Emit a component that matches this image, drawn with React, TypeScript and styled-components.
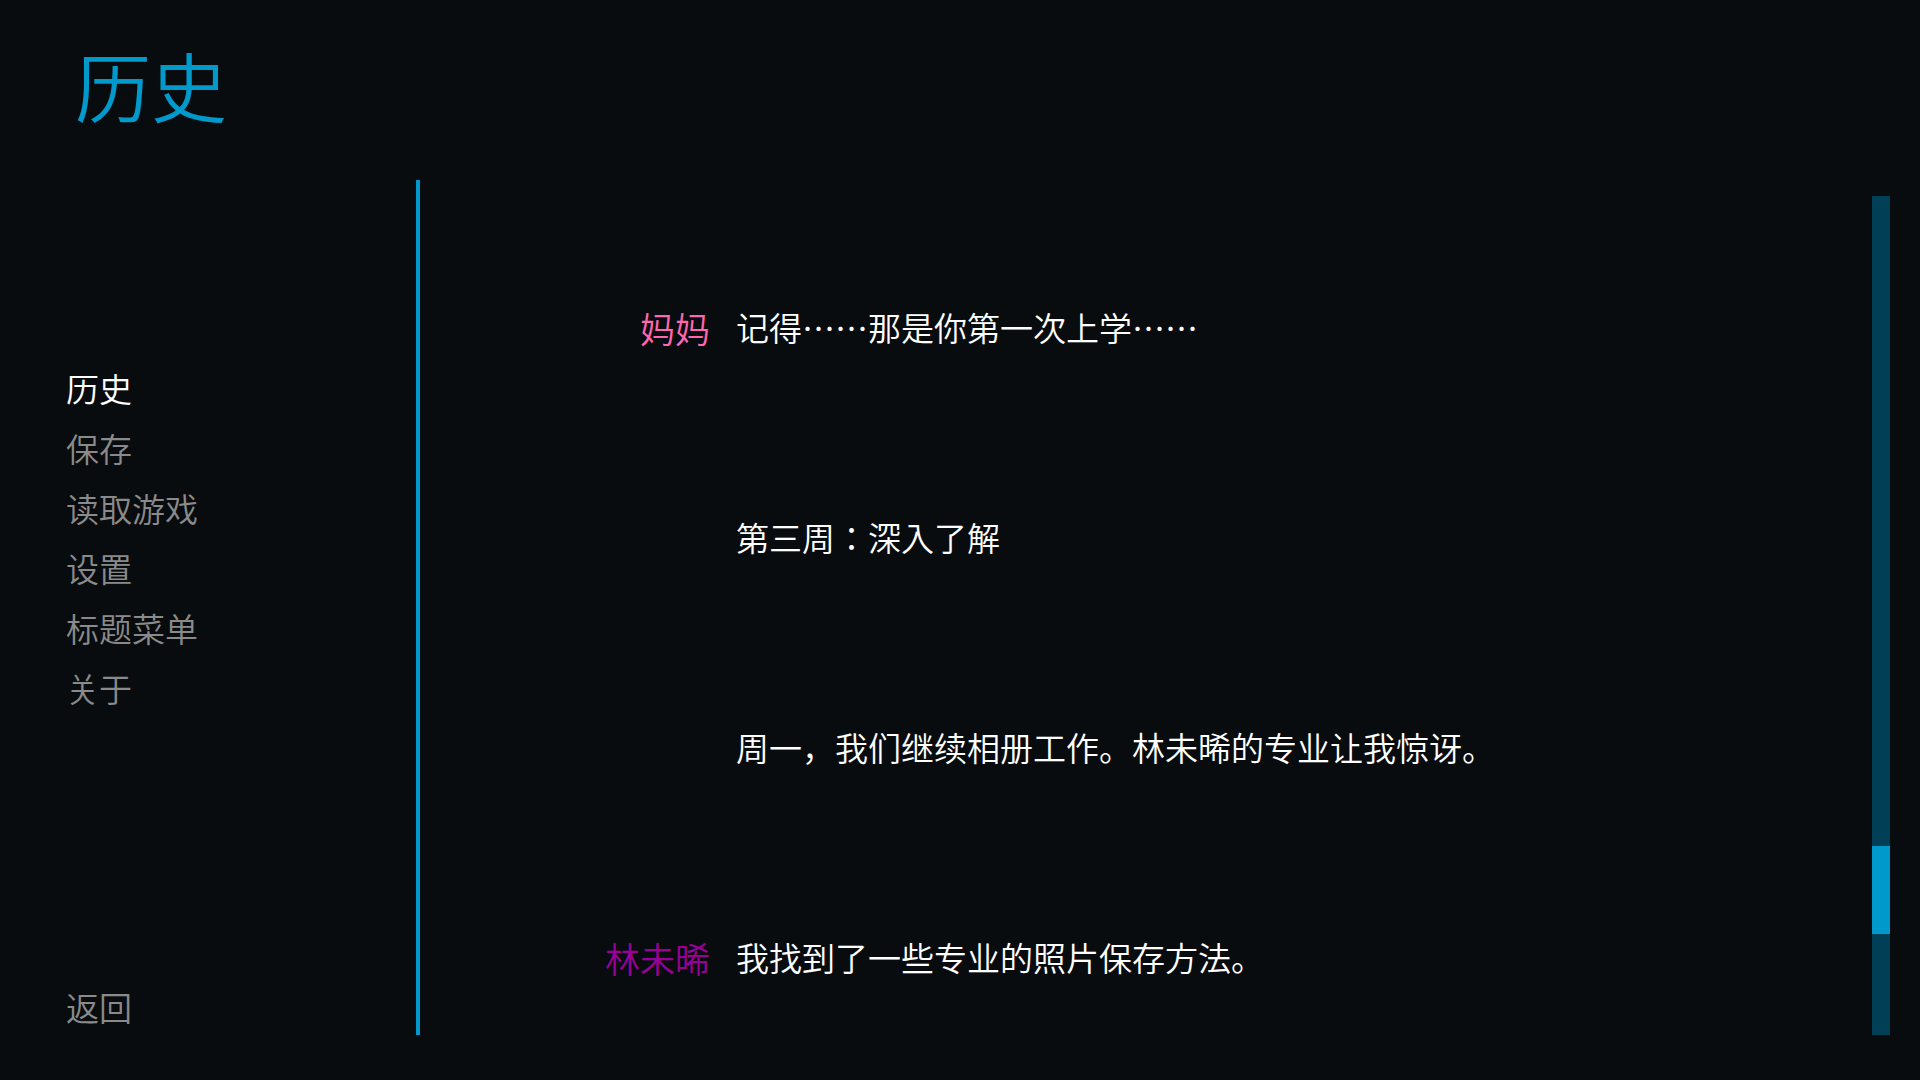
import React from 'react';
import styled, { createGlobalStyle } from 'styled-components';

const GlobalStyle = createGlobalStyle`
    html, body {
        margin: 0;
        padding: 0;
        background: #080c0e;
    }
    body {
        font-family: "Noto Sans CJK JP", "Noto Sans CJK SC", "Noto Sans", sans-serif;
    }
`;

const Screen = styled.div`
    width: 1920px;
    height: 1080px;
    background: #080c0e;
    display: flex;
    flex-direction: column;
    overflow: hidden;
`;

const Title = styled.h1`
    margin: 0;
    padding: 46px 0 0 75px;
    height: 180px;
    box-sizing: border-box;
    font-size: 76px;
    line-height: 1;
    font-weight: 350;
    color: #0099cc;
`;

const Body = styled.div`
    display: flex;
    height: 855px;
`;

const Nav = styled.nav`
    width: 416px;
    box-sizing: border-box;
    padding: 178px 0 0 66px;
    display: flex;
    flex-direction: column;
`;

const NavItem = styled.div<{ $active?: boolean }>`
    font-size: 33px;
    line-height: 60px;
    font-weight: 350;
    color: ${(props) => (props.$active ? '#ffffff' : '#8a8a8a')};
`;

const BackItem = styled(NavItem)`
    margin-top: auto;
    line-height: 54px;
    margin-bottom: 1px;
`;

const Main = styled.div`
    flex: 1;
    display: flex;
    border-left: 4px solid #0099cc;
    padding-right: 30px;
`;

const Viewport = styled.div`
    flex: 1;
    overflow: hidden;
    padding-top: 42px;
`;

const Entry = styled.div`
    display: grid;
    grid-template-columns: 290px 1fr;
    column-gap: 26px;
    align-items: center;
    height: 210px;
`;

const Who = styled.div<{ color: string }>`
    text-align: right;
    font-size: 35px;
    font-weight: 350;
    color: ${(props) => props.color};
`;

const What = styled.div`
    font-size: 33px;
    font-weight: 350;
    color: #ffffff;
`;

const Track = styled.div`
    width: 18px;
    margin-top: 16px;
    background: #003f55;
    position: relative;
`;

const Thumb = styled.div`
    position: absolute;
    left: 0;
    width: 18px;
    background: #0099cc;
`;

const history = [
    { who: '妈妈', color: '#ff66b0', what: '记得……那是你第一次上学……' },
    { who: '', color: '#ffffff', what: '第三周：深入了解' },
    { who: '', color: '#ffffff', what: '周一，我们继续相册工作。林未晞的专业让我惊讶。' },
    { who: '林未晞', color: '#990099', what: '我找到了一些专业的照片保存方法。' },
];

const menu = ['历史', '保存', '读取游戏', '设置', '标题菜单', '关于'];

export default function App() {
    const trackHeight = 839;
    const thumbTop = 650;
    const thumbHeight = 88;

    return (
        <>
            <GlobalStyle />
            <Screen>
                <Title>历史</Title>
                <Body>
                    <Nav>
                        {menu.map((item, i) => (
                            <NavItem key={item} $active={i === 0}>{item}</NavItem>
                        ))}
                        <BackItem>返回</BackItem>
                    </Nav>
                    <Main>
                        <Viewport>
                            {history.map((h, i) => (
                                <Entry key={i}>
                                    <Who color={h.color}>{h.who}</Who>
                                    <What>{h.what}</What>
                                </Entry>
                            ))}
                        </Viewport>
                        <Track style={{ height: trackHeight }}>
                            <Thumb style={{ top: thumbTop, height: thumbHeight }} />
                        </Track>
                    </Main>
                </Body>
            </Screen>
        </>
    );
}
